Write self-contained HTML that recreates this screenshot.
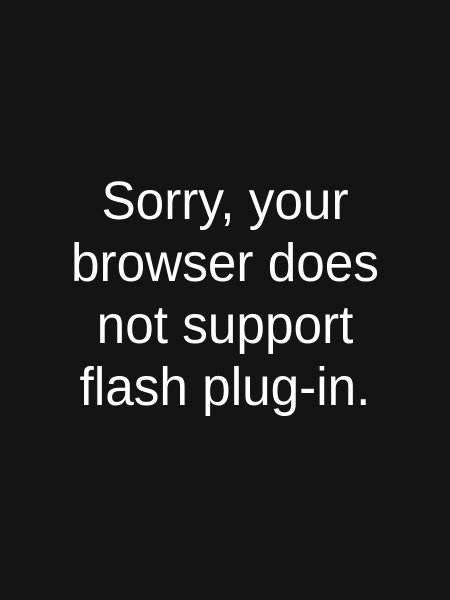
<!DOCTYPE html>
<html><head><meta charset="utf-8"><style>
html,body{margin:0;padding:0;width:450px;height:600px;background:#141414;overflow:hidden}
.t{position:absolute;left:0;top:170px;width:450px;text-align:center;color:#fff;font-family:"Liberation Sans",sans-serif;font-size:54px;line-height:62px;transform:scaleX(0.95);transform-origin:225px 0}
</style></head><body>
<div class="t">Sorry, your<br>browser does<br>not support<br>flash plug-in.</div>
</body></html>
